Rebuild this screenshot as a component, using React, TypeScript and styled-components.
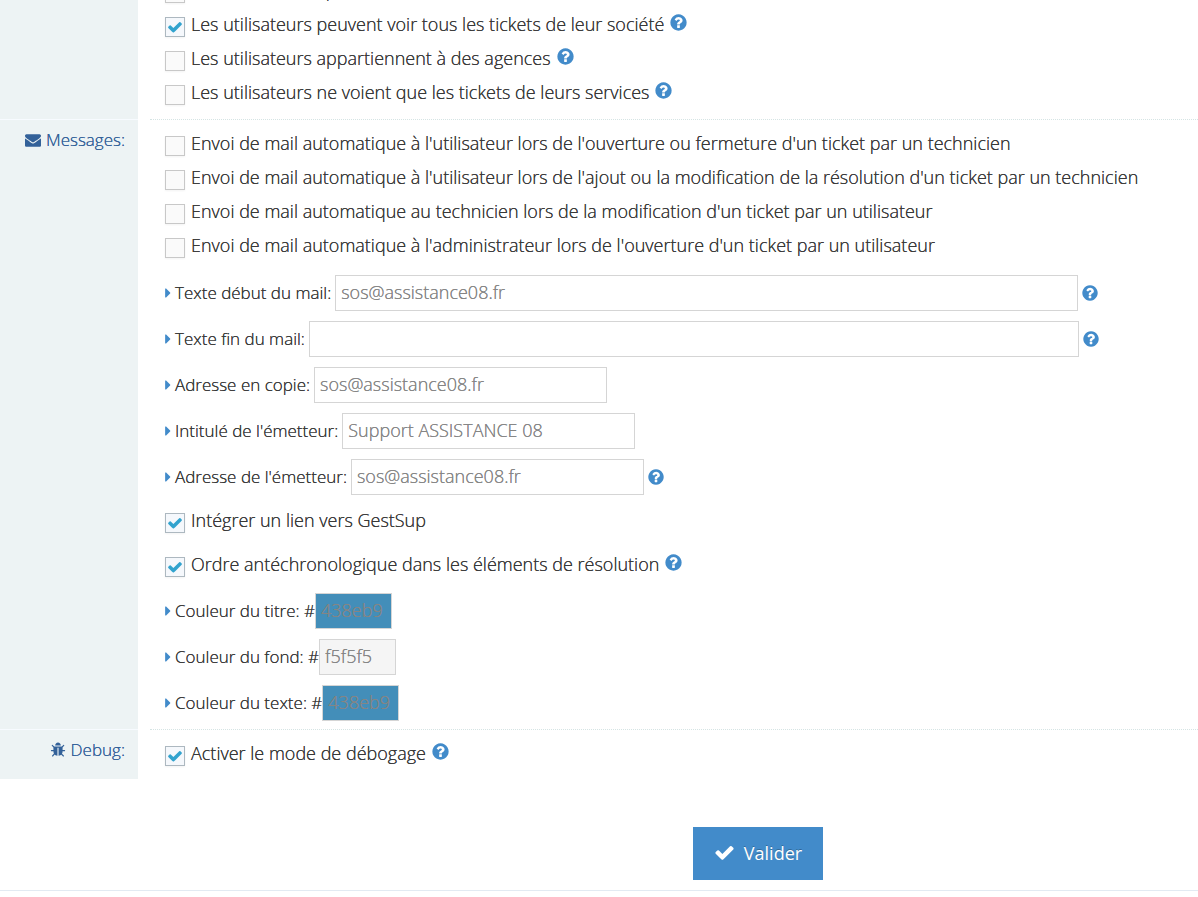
import React, { useId, useState } from "react";
import styled, { createGlobalStyle } from "styled-components";

const GlobalStyle = createGlobalStyle`
  *, *::before, *::after { box-sizing: border-box; }
  body {
    margin: 0;
    background: #fff;
    color: #393939;
    font-family: "Open Sans", "Liberation Sans", sans-serif;
    font-size: 17px;
    font-weight: 300;
    line-height: 24px;
    text-shadow: 0 0 0 currentColor;
    overflow-x: hidden;
  }
`;

const ICONS = {
  check:
    "M1671 566q0 40-28 68l-724 724-136 136q-28 28-68 28t-68-28l-136-136-362-362q-28-28-28-68t28-68l136-136q28-28 68-28t68 28l294 295 656-657q28-28 68-28t68 28l136 136q28 28 28 68z",
  help:
    "M1024 1376v-192q0-14-9-23t-23-9h-192q-14 0-23 9t-9 23v192q0 14 9 23t23 9h192q14 0 23-9t9-23zm256-672q0-88-55.5-163t-138.5-116-170-41q-243 0-371 213-15 24 8 42l132 100q7 6 19 6 16 0 25-12 53-68 86-92 34-24 86-24 48 0 85.5 26t37.5 59q0 38-20 61t-68 45q-63 28-115.5 86.5t-52.5 125.5v36q0 14 9 23t23 9h192q14 0 23-9t9-23q0-19 21.5-49.5t54.5-49.5q32-18 49-28.5t46-35 44.5-48 28-60.5 12.5-81zm384 192q0 209-103 385.5t-279.5 279.5-385.5 103-385.5-103-279.5-279.5-103-385.5 103-385.5 279.5-279.5 385.5-103 385.5 103 279.5 279.5 103 385.5z",
  caret:
    "M1152 896q0 26-19 45l-448 448q-19 19-45 19t-45-19-19-45v-896q0-26 19-45t45-19 45 19l448 448q19 19 19 45z",
  envelope:
    "M1792 710v794q0 66-47 113t-113 47h-1472q-66 0-113-47t-47-113v-794q44 49 101 87 362 246 497 345 57 42 92.5 65.5t94.5 48 110 24.5h2q51 0 110-24.5t94.5-48 92.5-65.5q170-123 498-345 57-39 100-87zm0-294q0 79-49 151t-122 123q-376 261-468 325-10 7-42.5 31t-54 38.5-52 32.5-57.5 27-50 9h-2q-23 0-50-9t-57.5-27-52-32.5-54-38.5-42.5-31q-91-64-262-182.5t-205-142.5q-62-42-117-115.5t-55-136.5q0-78 41.5-130t118.5-52h1472q65 0 112.5 47t47.5 113z",
  bug:
    "M1696 960q0 26-19 45t-45 19h-224q0 171-67 290l208 209q19 19 19 45t-19 45q-18 19-45 19t-45-19l-198-197q-5 5-15 13t-42 28.5-65 36.5-82 29-97 13v-896h-128v896q-51 0-101.5-13.5t-87-33-66-39-43.5-32.5l-15-14-183 207q-20 21-48 21-24 0-43-16-19-18-20.5-44.5t15.5-46.5l202-227q-58-114-58-274h-224q-26 0-45-19t-19-45 19-45 45-19h224v-294l-173-173q-19-19-19-45t19-45 45-19 45 19l173 173h844l173-173q19-19 45-19t45 19 19 45-19 45l-173 173v294h224q26 0 45 19t19 45zm-480-576h-640q0-133 93.5-226.5t226.5-93.5 226.5 93.5 93.5 226.5z",
};

type IconName = keyof typeof ICONS;

const Svg = styled.svg<{ $size: number }>`
  display: block;
  flex: none;
  width: ${(p) => p.$size}px;
  height: ${(p) => p.$size}px;
  fill: currentColor;
`;

const Icon = ({ name, size }: { name: IconName; size: number }) => (
  <Svg $size={size} viewBox="0 0 1792 1792" aria-hidden="true">
    <path d={ICONS[name]} />
  </Svg>
);

const Section = styled.section`
  display: grid;
  grid-template-columns: 138px minmax(0, 1fr);
  column-gap: 12px;
`;

const SectionName = styled.h2<{ $first?: boolean }>`
  display: flex;
  align-items: flex-start;
  justify-content: flex-end;
  gap: 5px;
  margin: 0;
  padding: 8px 13px 0 0;
  border-top: ${(p) => (p.$first ? "none" : "1px solid #f7fbff")};
  background: #edf3f4;
  color: #336199;
  font-size: 17px;
  font-weight: 300;
  line-height: 24px;
  text-shadow: 0 0 0 currentColor;

  svg {
    margin-top: 4px;
  }
`;

const SectionBody = styled.div<{ $first?: boolean; $bottom: number }>`
  padding: ${(p) => (p.$first ? 0 : 9)}px 15px ${(p) => p.$bottom}px;
  border-top: ${(p) => (p.$first ? "none" : "1px dotted #d5e4e4")};
`;

/* The list is scrolled: only the foot of its first option shows. */
const ScrolledList = styled.div`
  margin-top: -24px;
`;

const OptionRow = styled.div<{ $wide?: boolean }>`
  display: flex;
  align-items: flex-start;
  height: ${(p) => (p.$wide ? 44 : 34)}px;
  padding-top: ${(p) => (p.$wide ? 13 : 2)}px;
`;

const OptionLabel = styled.label`
  display: flex;
  align-items: flex-start;
  gap: 6px;
  font-size: 18px;
  line-height: 24px;
  white-space: nowrap;
`;

const BoxWrap = styled.span`
  position: relative;
  display: block;
  flex: none;
  width: 20px;
  height: 20px;
  margin-top: 5px;
  color: #32a3ce;

  svg {
    position: absolute;
    top: 2px;
    left: 2px;
    pointer-events: none;
  }
`;

const Box = styled.input`
  appearance: none;
  display: block;
  width: 20px;
  height: 20px;
  margin: 0;
  border: 1px solid #c8c8c8;
  background: #fafafa;
  box-shadow: 0 1px 2px rgba(0, 0, 0, 0.05);

  &:checked {
    border-color: #adb8c0;
    background: #f5f8fc;
  }
`;

const HelpButton = styled.button<{ $raised?: boolean }>`
  display: block;
  margin: ${(p) => (p.$raised ? "1px 0 0 5px" : "0 0 0 3px")};
  padding: 0;
  border: 0;
  background: none;
  color: #428bca;
  cursor: pointer;
`;

const Help = ({ raised }: { raised?: boolean }) => (
  <HelpButton type="button" aria-label="Aide" $raised={raised}>
    <Icon name="help" size={raised ? 19 : 18} />
  </HelpButton>
);

type OptionProps = { text: string; on?: boolean; help?: boolean; wide?: boolean };

const Option = ({ text, on = false, help, wide }: OptionProps) => {
  const [checked, setChecked] = useState(on);
  return (
    <OptionRow $wide={wide}>
      <OptionLabel>
        <BoxWrap>
          <Box type="checkbox" checked={checked} onChange={(e) => setChecked(e.target.checked)} />
          {checked && <Icon name="check" size={16} />}
        </BoxWrap>
        {text}
      </OptionLabel>
      {help && <Help raised />}
    </OptionRow>
  );
};

const FieldRow = styled.div`
  display: flex;
  align-items: center;
  padding-top: 10px;
`;

const FieldLabel = styled.label`
  display: flex;
  align-items: center;
  flex: none;
  white-space: nowrap;
`;

const Caret = styled.span`
  display: block;
  width: 10px;
  overflow: hidden;
  color: #428bca;

  svg {
    margin-left: -5px;
  }
`;

const TextInput = styled.input<{ $width: number; $tint?: string }>`
  flex: 0 1 ${(p) => p.$width}px;
  min-width: 0;
  width: ${(p) => p.$width}px;
  height: 36px;
  margin: 0 0 0 ${(p) => (p.$tint ? 0 : 4)}px;
  padding: 0 5px 2px;
  border: 1px solid #d5d5d5;
  border-radius: 0;
  background: ${(p) => p.$tint ?? "#fff"};
  color: #858585;
  font-family: inherit;
  font-size: 18px;
  font-weight: 300;
  line-height: 24px;
  text-shadow: 0 0 0 currentColor;
`;

type FieldProps = { label: string; value: string; width: number; help?: boolean; tint?: string };

const Field = ({ label, value, width, help, tint }: FieldProps) => {
  const id = useId();
  return (
    <FieldRow>
      <FieldLabel htmlFor={id}>
        <Caret>
          <Icon name="caret" size={16} />
        </Caret>
        {label}
      </FieldLabel>
      <TextInput id={id} type="text" defaultValue={value} $width={width} $tint={tint} />
      {help && <Help />}
    </FieldRow>
  );
};

const Actions = styled.div`
  display: flex;
  justify-content: center;
  margin-top: 48px;
  padding: 0 0 10px 318px;
  border-bottom: 1px solid #e2eaf2;
`;

const SubmitButton = styled.button`
  display: flex;
  align-items: center;
  justify-content: center;
  gap: 9px;
  min-width: 130px;
  height: 53px;
  padding: 0 20px 2px;
  border: 0;
  background: #428bca;
  color: #fff;
  font-family: inherit;
  font-size: 18px;
  line-height: 24px;
  text-shadow: 0 -1px 0 rgba(0, 0, 0, 0.25);
  cursor: pointer;
`;

export default function App() {
  return (
    <form onSubmit={(e) => e.preventDefault()}>
      <GlobalStyle />
      <Section>
        <SectionName $first />
        <SectionBody $first $bottom={7}>
          <ScrolledList>
            <Option text="Limiter un ticket par service" />
            <Option text="Les utilisateurs peuvent voir tous les tickets de leur société" on help />
            <Option text="Les utilisateurs appartiennent à des agences" help />
            <Option text="Les utilisateurs ne voient que les tickets de leurs services" help />
          </ScrolledList>
        </SectionBody>
      </Section>
      <Section>
        <SectionName>
          <Icon name="envelope" size={16} />
          Messages:
        </SectionName>
        <SectionBody $bottom={8}>
          <Option text="Envoi de mail automatique à l'utilisateur lors de l'ouverture ou fermeture d'un ticket par un technicien" />
          <Option text="Envoi de mail automatique à l'utilisateur lors de l'ajout ou la modification de la résolution d'un ticket par un technicien" />
          <Option text="Envoi de mail automatique au technicien lors de la modification d'un ticket par un utilisateur" />
          <Option text="Envoi de mail automatique à l'administrateur lors de l'ouverture d'un ticket par un utilisateur" />
          <Field label="Texte début du mail:" value="sos@assistance08.fr" width={743} help />
          <Field label="Texte fin du mail:" value="" width={770} help />
          <Field label="Adresse en copie:" value="sos@assistance08.fr" width={293} />
          <Field label="Intitulé de l'émetteur:" value="Support ASSISTANCE 08" width={293} />
          <Field label="Adresse de l'émetteur:" value="sos@assistance08.fr" width={293} help />
          <Option text="Intégrer un lien vers GestSup" on wide />
          <Option text="Ordre antéchronologique dans les éléments de résolution" on help wide />
          <Field label="Couleur du titre: #" value="438eb9" width={77} tint="#438eb9" />
          <Field label="Couleur du fond: #" value="f5f5f5" width={77} tint="#f5f5f5" />
          <Field label="Couleur du texte: #" value="438eb9" width={77} tint="#438eb9" />
        </SectionBody>
      </Section>
      <Section>
        <SectionName>
          <Icon name="bug" size={16} />
          Debug:
        </SectionName>
        <SectionBody $bottom={6}>
          <Option text="Activer le mode de débogage" on help />
        </SectionBody>
      </Section>
      <Actions>
        <SubmitButton type="submit">
          <Icon name="check" size={21} />
          Valider
        </SubmitButton>
      </Actions>
    </form>
  );
}
